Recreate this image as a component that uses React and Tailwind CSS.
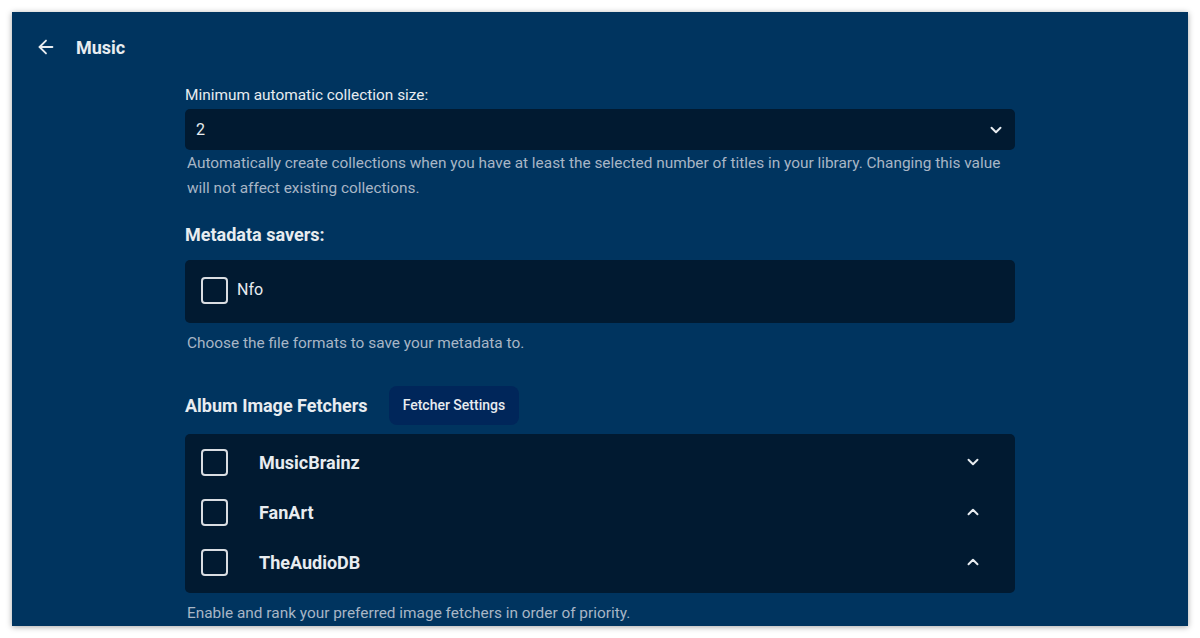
import { ArrowLeft, ChevronDown, ChevronUp } from 'lucide-react'

const FETCHERS = [
  { name: 'MusicBrainz', open: false },
  { name: 'FanArt', open: true },
  { name: 'TheAudioDB', open: true },
]

function Box() {
  return <span className="block w-[27px] h-[27px] rounded-[4px] border-2 border-[#d9dde2] shrink-0" />
}

export default function App() {
  return (
    <div className="w-[1200px] h-[638px] bg-white p-3 font-['Roboto',sans-serif]">
      <div className="h-[614px] bg-[#00345f] shadow-[0_1px_6px_rgba(0,0,0,0.35)] overflow-hidden text-[#e8ecf0]">
        <header className="h-[70px] flex items-center pl-[23px]">
          <ArrowLeft size={22} strokeWidth={2} className="text-[#e8ecf0]" />
          <h1 className="ml-[19px] text-[18px] font-bold">Music</h1>
        </header>

        <div className="w-[830px] ml-[173px] pt-[3px]">
          <label className="block text-[15.4px] leading-[20px]">Minimum automatic collection size:</label>
          <div className="mt-[4px] h-[41px] rounded-[5px] bg-[#011a31] flex items-center justify-between pl-[11px] pr-[10px] text-[16px]">
            <span>2</span>
            <ChevronDown size={18} strokeWidth={2.6} />
          </div>
          <p className="mt-[1px] px-[2px] text-[15.4px] leading-[25px] text-[#a8b6c6]">
            Automatically create collections when you have at least the selected number of titles in your library. Changing this value will not affect existing collections.
          </p>

          <h2 className="mt-[22px] text-[18px] leading-[24px] font-bold">Metadata savers:</h2>
          <div className="mt-[13px] h-[63px] rounded-[5px] bg-[#011a31] flex items-center pl-[16px] pb-[3px]">
            <Box />
            <span className="ml-[9px] text-[16px]">Nfo</span>
          </div>
          <p className="mt-[8px] px-[2px] text-[15.4px] leading-[24px] text-[#a8b6c6]">Choose the file formats to save your metadata to.</p>

          <div className="mt-[31px] flex items-center">
            <h2 className="text-[18px] font-bold">Album Image Fetchers</h2>
            <button className="ml-[21px] h-[39px] px-[14px] rounded-[8px] bg-[#00265a] text-[14px] font-medium text-[#e8ecf0]">Fetcher Settings</button>
          </div>
          <div className="mt-[9px] rounded-[5px] bg-[#011a31] pt-[3px] pb-[6px]">
            {FETCHERS.map((f) => (
              <div key={f.name} className="h-[50px] flex items-center pl-[16px] pr-[33px]">
                <Box />
                <span className="ml-[31px] text-[18px] font-bold flex-1">{f.name}</span>
                {f.open ? <ChevronUp size={18} strokeWidth={2.6} /> : <ChevronDown size={18} strokeWidth={2.6} />}
              </div>
            ))}
          </div>
          <p className="mt-[8px] px-[2px] text-[15.4px] leading-[24px] text-[#a8b6c6]">Enable and rank your preferred image fetchers in order of priority.</p>
        </div>
      </div>
    </div>
  )
}
